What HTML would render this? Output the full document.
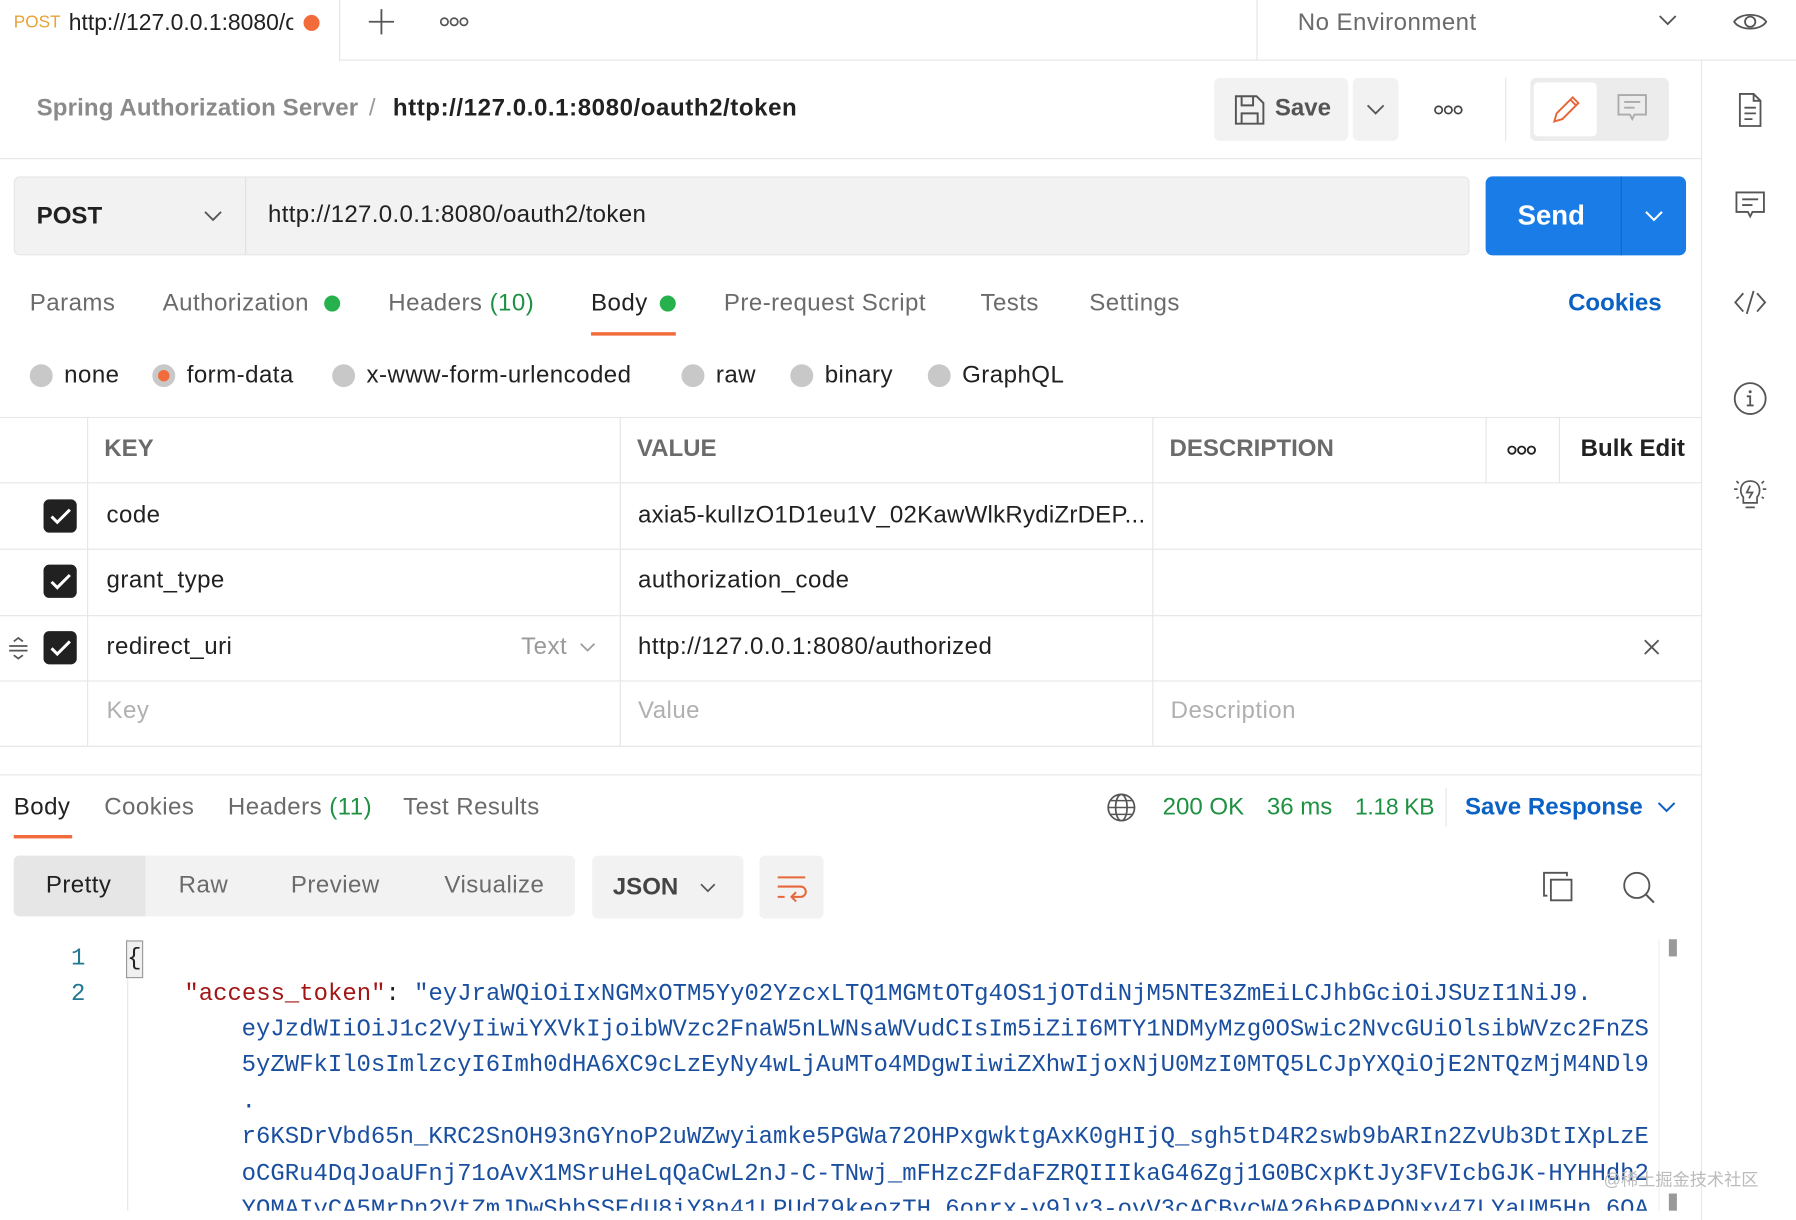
<!DOCTYPE html>
<html><head><meta charset="utf-8"><style>
*{margin:0;padding:0;box-sizing:border-box}
html,body{width:1796px;height:1220px;overflow:hidden;background:#fff}
#w{position:absolute;left:0;top:0;width:1568px;height:1065px;transform:scale(1.14541);transform-origin:0 0;font-family:"Liberation Sans",sans-serif;color:#212121}
.a{position:absolute;white-space:nowrap}
.t{font-size:21px;line-height:24px;letter-spacing:0.4px}
.g{color:#6b6b6b}
.hl{position:absolute;height:1px;background:#e6e6e6}
.vl{position:absolute;width:1px;background:#e6e6e6}
.rd{position:absolute;width:20px;height:20px;border-radius:50%;background:#c8c8c8}
.cb{position:absolute;left:38px;width:29px;height:29px;border-radius:5px;background:#212121}
.mono{font-family:"Liberation Mono",monospace;font-size:20.9px;line-height:31px;color:#1a4fa0}
svg{position:absolute;overflow:visible}
</style></head><body><div id="w">
<!-- top tab bar -->
<div class="hl" style="left:296px;top:52px;width:1272px"></div>
<div class="vl" style="left:296px;top:0;height:53px"></div>
<div class="vl" style="left:1097px;top:0;height:53px"></div>
<div class="a" style="left:12px;top:11px;font-size:15px;color:#e8a33a">POST</div>
<div class="a" style="left:60px;top:9px;font-size:20px;width:196px;overflow:hidden">http://127.0.0.1:8080/oauth2</div>
<div class="a" style="left:265px;top:13px;width:14px;height:14px;border-radius:50%;background:#f26b3a"></div>
<svg style="left:322px;top:8px" width="22" height="22"><path d="M11 0v22 M0 11h22" stroke="#555" stroke-width="1.6"/></svg>
<svg style="left:384px;top:14px" width="26" height="10"><circle cx="4" cy="5" r="3.2" stroke="#555" stroke-width="1.5" fill="none"/><circle cx="12.5" cy="5" r="3.2" stroke="#555" stroke-width="1.5" fill="none"/><circle cx="21" cy="5" r="3.2" stroke="#555" stroke-width="1.5" fill="none"/></svg>
<div class="a t g" style="left:1133px;top:8px">No Environment</div>
<svg style="left:1448px;top:13px" width="16" height="10"><path d="M1 1l7 7 7-7" stroke="#555" stroke-width="1.6" fill="none"/></svg>
<svg style="left:1513px;top:9px" width="30" height="20"><path d="M1 10C6 2 24 2 29 10 24 18 6 18 1 10z" stroke="#555" stroke-width="1.6" fill="none"/><circle cx="15" cy="10" r="4.5" stroke="#555" stroke-width="1.6" fill="none"/></svg>
<!-- right sidebar -->
<div class="vl" style="left:1485px;top:53px;height:1012px"></div>
<svg style="left:1517px;top:81px" width="22" height="30"><path d="M2 1h12l6 6v22H2z M14 1v6h6 M6 13h10 M6 18h10 M6 23h7" stroke="#555" stroke-width="1.6" fill="none"/></svg>
<svg style="left:1515px;top:167px" width="26" height="26"><path d="M1 1h24v17H15l-2 4-2-4H1z M6 7h14 M6 12h9" stroke="#555" stroke-width="1.6" fill="none"/></svg>
<svg style="left:1513px;top:253px" width="30" height="22"><path d="M9 3L2 11l7 8 M21 3l7 8-7 8 M18 1l-6 20" stroke="#555" stroke-width="1.6" fill="none"/></svg>
<svg style="left:1513px;top:333px" width="30" height="30"><circle cx="15" cy="15" r="13.5" stroke="#555" stroke-width="1.6" fill="none"/><path d="M12 13h3v8 M12 21h6" stroke="#555" stroke-width="1.6" fill="none"/><circle cx="15" cy="9" r="1.3" fill="#555"/></svg>
<svg style="left:1512px;top:415px" width="32" height="32"><path d="M10 19c-4-4-3-14 6-14s10 10 6 14v5h-12z M12 28h8 M16 9l-3 6h5l-3 5 M2 12h3 M27 12h3 M4 5l2 2 M28 5l-2 2 M4 20l2-1 M28 20l-2-1" stroke="#555" stroke-width="1.5" fill="none"/></svg>
<!-- breadcrumb -->
<div class="a" style="left:32px;top:83px;font-size:21px;color:#8a8a8a;font-weight:bold;letter-spacing:0.1px">Spring Authorization Server</div>
<div class="a" style="left:322px;top:83px;font-size:21px;color:#999">/</div>
<div class="a" style="left:343px;top:83px;font-size:21px;font-weight:bold;letter-spacing:0.5px">http://127.0.0.1:8080/oauth2/token</div>
<div class="a" style="left:1060px;top:68px;width:117px;height:55px;background:#f2f2f2;border-radius:5px"></div>
<div class="a" style="left:1181px;top:68px;width:40px;height:55px;background:#f2f2f2;border-radius:5px"></div>
<svg style="left:1078px;top:83px" width="26" height="26"><path d="M1 1h18l6 6v18H1z M6 1v8h10V1 M6 25v-9h14v9" stroke="#555" stroke-width="1.7" fill="none"/></svg>
<div class="a" style="left:1113px;top:83px;font-size:21px;font-weight:bold;color:#555">Save</div>
<svg style="left:1193px;top:91px" width="16" height="10"><path d="M1 1l7 7 7-7" stroke="#555" stroke-width="1.6" fill="none"/></svg>
<svg style="left:1252px;top:91px" width="26" height="10"><circle cx="4" cy="5" r="3.2" stroke="#444" stroke-width="1.5" fill="none"/><circle cx="12.5" cy="5" r="3.2" stroke="#444" stroke-width="1.5" fill="none"/><circle cx="21" cy="5" r="3.2" stroke="#444" stroke-width="1.5" fill="none"/></svg>
<div class="vl" style="left:1314px;top:68px;height:55px"></div>
<div class="a" style="left:1336px;top:68px;width:121px;height:55px;background:#ececec;border-radius:5px"></div>
<div class="a" style="left:1339px;top:72px;width:55px;height:47px;background:#fff;border-radius:4px"></div>
<svg style="left:1354px;top:81px" width="28" height="28"><path d="M3 25l2-7L19 4l5 5-14 14z M17 6l5 5" stroke="#e8673a" stroke-width="1.7" fill="none"/></svg>
<svg style="left:1412px;top:82px" width="26" height="26"><path d="M1 1h24v17H15l-2 4-2-4H1z M6 7h14 M6 12h9" stroke="#aaa" stroke-width="1.6" fill="none"/></svg>
<div class="hl" style="left:0;top:138px;width:1485px"></div>
<!-- url bar -->
<div class="a" style="left:12px;top:154px;width:1271px;height:69px;background:#f2f2f2;border:1px solid #e6e6e6;border-radius:5px"></div>
<div class="vl" style="left:214px;top:155px;height:67px;background:#e0e0e0"></div>
<div class="a" style="left:32px;top:177px;font-size:21px;font-weight:bold">POST</div>
<svg style="left:178px;top:184px" width="16" height="10"><path d="M1 1l7 7 7-7" stroke="#555" stroke-width="1.6" fill="none"/></svg>
<div class="a" style="left:234px;top:176px;font-size:21px;letter-spacing:0.3px">http://127.0.0.1:8080/oauth2/token</div>
<div class="a" style="left:1297px;top:154px;width:175px;height:69px;background:#1a7ce6;border-radius:6px"></div>
<div class="vl" style="left:1415px;top:154px;height:69px;background:#1466c2"></div>
<div class="a" style="left:1325px;top:175px;font-size:24px;font-weight:bold;color:#fff">Send</div>
<svg style="left:1436px;top:184px" width="16" height="10"><path d="M1 1l7 7 7-7" stroke="#fff" stroke-width="1.8" fill="none"/></svg>
<!-- tabs -->
<div class="a t g" style="left:26px;top:253px">Params</div>
<div class="a t g" style="left:142px;top:253px">Authorization</div>
<div class="a" style="left:283px;top:258px;width:14px;height:14px;border-radius:50%;background:#26b14d"></div>
<div class="a t g" style="left:339px;top:253px">Headers <span style="color:#1f9142">(10)</span></div>
<div class="a t" style="left:516px;top:253px">Body</div>
<div class="a" style="left:576px;top:258px;width:14px;height:14px;border-radius:50%;background:#26b14d"></div>
<div class="a" style="left:516px;top:290px;width:74px;height:3px;background:#f26b3a"></div>
<div class="a t g" style="left:632px;top:253px">Pre-request Script</div>
<div class="a t g" style="left:856px;top:253px">Tests</div>
<div class="a t g" style="left:951px;top:253px">Settings</div>
<div class="a t" style="left:1369px;top:253px;color:#0b61c4;font-weight:bold;letter-spacing:0">Cookies</div>
<!-- radios -->
<div class="rd" style="left:26px;top:318px"></div><div class="a t" style="left:56px;top:316px">none</div>
<div class="rd" style="left:133px;top:318px"></div><div class="a" style="left:138px;top:323px;width:10px;height:10px;border-radius:50%;background:#f26b3a"></div><div class="a t" style="left:163px;top:316px">form-data</div>
<div class="rd" style="left:290px;top:318px"></div><div class="a t" style="left:320px;top:316px">x-www-form-urlencoded</div>
<div class="rd" style="left:595px;top:318px"></div><div class="a t" style="left:625px;top:316px">raw</div>
<div class="rd" style="left:690px;top:318px"></div><div class="a t" style="left:720px;top:316px">binary</div>
<div class="rd" style="left:810px;top:318px"></div><div class="a t" style="left:840px;top:316px">GraphQL</div>
<!-- table -->
<div class="hl" style="left:0;top:364px;width:1485px"></div>
<div class="hl" style="left:0;top:421px;width:1485px"></div>
<div class="hl" style="left:0;top:479px;width:1485px"></div>
<div class="hl" style="left:0;top:537px;width:1485px"></div>
<div class="hl" style="left:0;top:594px;width:1485px"></div>
<div class="hl" style="left:0;top:651px;width:1485px"></div>
<div class="vl" style="left:76px;top:364px;height:287px"></div>
<div class="vl" style="left:541px;top:364px;height:287px"></div>
<div class="vl" style="left:1006px;top:364px;height:287px"></div>
<div class="vl" style="left:1297px;top:364px;height:57px"></div>
<div class="vl" style="left:1361px;top:364px;height:57px"></div>
<div class="a t g" style="left:91px;top:380px;font-weight:bold;letter-spacing:0">KEY</div>
<div class="a t g" style="left:556px;top:380px;font-weight:bold;letter-spacing:0">VALUE</div>
<div class="a t g" style="left:1021px;top:380px;font-weight:bold;letter-spacing:0">DESCRIPTION</div>
<svg style="left:1316px;top:388px" width="26" height="10"><circle cx="4" cy="5" r="3.2" stroke="#222" stroke-width="1.6" fill="none"/><circle cx="12.5" cy="5" r="3.2" stroke="#222" stroke-width="1.6" fill="none"/><circle cx="21" cy="5" r="3.2" stroke="#222" stroke-width="1.6" fill="none"/></svg>
<div class="a t" style="left:1380px;top:380px;font-weight:bold;letter-spacing:0">Bulk Edit</div>
<div class="cb" style="top:436px"></div><div class="cb" style="top:493px"></div><div class="cb" style="top:551px"></div>
<svg style="left:43px;top:443px" width="20" height="16"><path d="M2 8l5 5L18 2" stroke="#fff" stroke-width="2.6" fill="none"/></svg>
<svg style="left:43px;top:500px" width="20" height="16"><path d="M2 8l5 5L18 2" stroke="#fff" stroke-width="2.6" fill="none"/></svg>
<svg style="left:43px;top:558px" width="20" height="16"><path d="M2 8l5 5L18 2" stroke="#fff" stroke-width="2.6" fill="none"/></svg>
<svg style="left:6px;top:556px" width="20" height="20"><path d="M2 8h16 M2 12h16 M6 4l4-3 4 3 M6 16l4 3 4-3" stroke="#555" stroke-width="1.5" fill="none"/></svg>
<div class="a t" style="left:93px;top:438px">code</div>
<div class="a t" style="left:557px;top:438px;letter-spacing:0.2px">axia5-kulIzO1D1eu1V_02KawWlkRydiZrDEP...</div>
<div class="a t" style="left:93px;top:495px">grant_type</div>
<div class="a t" style="left:557px;top:495px">authorization_code</div>
<div class="a t" style="left:93px;top:553px">redirect_uri</div>
<div class="a t" style="left:455px;top:553px;color:#9a9a9a">Text</div>
<svg style="left:506px;top:561px" width="14" height="9"><path d="M1 1l6 6 6-6" stroke="#999" stroke-width="1.5" fill="none"/></svg>
<div class="a t" style="left:557px;top:553px">http://127.0.0.1:8080/authorized</div>
<svg style="left:1435px;top:558px" width="14" height="14"><path d="M1 1l12 12 M13 1L1 13" stroke="#555" stroke-width="1.6"/></svg>
<div class="a t" style="left:93px;top:609px;color:#b0b0b0">Key</div>
<div class="a t" style="left:557px;top:609px;color:#b0b0b0">Value</div>
<div class="a t" style="left:1022px;top:609px;color:#b0b0b0">Description</div>
<!-- response -->
<div class="hl" style="left:0;top:676px;width:1485px"></div>
<div class="a t" style="left:12px;top:693px">Body</div>
<div class="a" style="left:12px;top:729px;width:51px;height:3px;background:#f26b3a"></div>
<div class="a t g" style="left:91px;top:693px">Cookies</div>
<div class="a t g" style="left:199px;top:693px">Headers <span style="color:#1f9142">(11)</span></div>
<div class="a t g" style="left:352px;top:693px">Test Results</div>
<svg style="left:966px;top:692px" width="26" height="26"><circle cx="13" cy="13" r="11.5" stroke="#555" stroke-width="1.5" fill="none"/><ellipse cx="13" cy="13" rx="5" ry="11.5" stroke="#555" stroke-width="1.5" fill="none"/><path d="M1.5 13h23 M4 7h18 M4 19h18" stroke="#555" stroke-width="1.3"/></svg>
<div class="a t" style="left:1015px;top:693px;color:#1f9142;letter-spacing:0">200 OK</div>
<div class="a t" style="left:1106px;top:693px;color:#1f9142;letter-spacing:0">36 ms</div>
<div class="a t" style="left:1183px;top:693px;color:#1f9142;letter-spacing:-0.3px;font-size:20px">1.18 KB</div>
<div class="vl" style="left:1262px;top:688px;height:34px"></div>
<div class="a t" style="left:1279px;top:693px;color:#0b61c4;font-weight:bold;letter-spacing:0">Save Response</div>
<svg style="left:1447px;top:700px" width="16" height="10"><path d="M1 1l7 7 7-7" stroke="#0b61c4" stroke-width="1.8" fill="none"/></svg>
<div class="a" style="left:12px;top:747px;width:490px;height:53px;background:#f2f2f2;border-radius:5px"></div>
<div class="a" style="left:12px;top:747px;width:115px;height:53px;background:#e6e6e6;border-radius:5px 0 0 5px"></div>
<div class="a t" style="left:40px;top:761px">Pretty</div>
<div class="a t g" style="left:156px;top:761px">Raw</div>
<div class="a t g" style="left:254px;top:761px">Preview</div>
<div class="a t g" style="left:388px;top:761px">Visualize</div>
<div class="a" style="left:517px;top:747px;width:132px;height:55px;background:#f2f2f2;border-radius:5px"></div>
<div class="a t" style="left:535px;top:763px;font-weight:bold;color:#444;letter-spacing:0">JSON</div>
<svg style="left:611px;top:771px" width="14" height="9"><path d="M1 1l6 6 6-6" stroke="#555" stroke-width="1.5" fill="none"/></svg>
<div class="a" style="left:663px;top:747px;width:56px;height:55px;background:#f2f2f2;border-radius:5px"></div>
<svg style="left:678px;top:764px" width="28" height="24"><path d="M1 2h24 M1 10h20a4 4 0 0 1 0 9h-7 M17 15l-4 4 4 4 M1 19h6" stroke="#e8673a" stroke-width="1.8" fill="none"/></svg>
<svg style="left:1347px;top:761px" width="28" height="28"><path d="M7 7h18v18H7z M4 21H1V1h20v3" stroke="#555" stroke-width="1.6" fill="none"/></svg>
<svg style="left:1416px;top:761px" width="30" height="30"><circle cx="13" cy="12" r="11" stroke="#555" stroke-width="1.6" fill="none"/><path d="M21 20l7 7" stroke="#555" stroke-width="1.8"/></svg>
<!-- code -->
<div class="vl" style="left:111px;top:820px;height:237px"></div>
<div class="vl" style="left:1448px;top:820px;height:237px;background:#efefef"></div>
<div class="a" style="left:1457px;top:820px;width:7px;height:15px;background:#999"></div>
<div class="a" style="left:1457px;top:1042px;width:7px;height:15px;background:#999"></div>
<div class="a mono" style="left:62px;top:822px;color:#237893">1</div>
<div class="a mono" style="left:62px;top:853px;color:#237893">2</div>
<div class="a mono" style="left:111px;top:822px;color:#222;background:#f0f0f0;outline:1px solid #999">{</div>
<div style="position:absolute;left:0;top:0;width:1448px;height:1057px;overflow:hidden">
<div class="a mono" style="left:161px;top:853px"><span style="color:#a31515">"access_token"</span><span style="color:#222">: </span>"eyJraWQiOiIxNGMxOTM5Yy02YzcxLTQ1MGMtOTg4OS1jOTdiNjM5NTE3ZmEiLCJhbGciOiJSUzI1NiJ9.</div>
<div class="a mono" style="left:211px;top:884px">eyJzdWIiOiJ1c2VyIiwiYXVkIjoibWVzc2FnaW5nLWNsaWVudCIsIm5iZiI6MTY1NDMyMzg0OSwic2NvcGUiOlsibWVzc2FnZS</div>
<div class="a mono" style="left:211px;top:915px">5yZWFkIl0sImlzcyI6Imh0dHA6XC9cLzEyNy4wLjAuMTo4MDgwIiwiZXhwIjoxNjU0MzI0MTQ5LCJpYXQiOjE2NTQzMjM4NDl9</div>
<div class="a mono" style="left:211px;top:947px">.</div>
<div class="a mono" style="left:211px;top:978px">r6KSDrVbd65n_KRC2SnOH93nGYnoP2uWZwyiamke5PGWa72OHPxgwktgAxK0gHIjQ_sgh5tD4R2swb9bARIn2ZvUb3DtIXpLzE</div>
<div class="a mono" style="left:211px;top:1010px">oCGRu4DqJoaUFnj71oAvX1MSruHeLqQaCwL2nJ-C-TNwj_mFHzcZFdaFZRQIIIkaG46Zgj1G0BCxpKtJy3FVIcbGJK-HYHHdh2</div>
<div class="a mono" style="left:211px;top:1041px">YOMAIyCA5MrDn2VtZmJDwSbhSSEdU8iY8n41LPUd79keozTH_6onrx-v9lv3-ovV3cACBvcWA26b6PAPONxv47LYaUM5Hn_6OA</div>
</div>
<div class="a" style="left:1400px;top:1019px;font-size:15px;color:#bbb;font-family:'Liberation Sans','Noto Sans CJK SC',sans-serif">@稀土掘金技术社区</div>
</div></body></html>
